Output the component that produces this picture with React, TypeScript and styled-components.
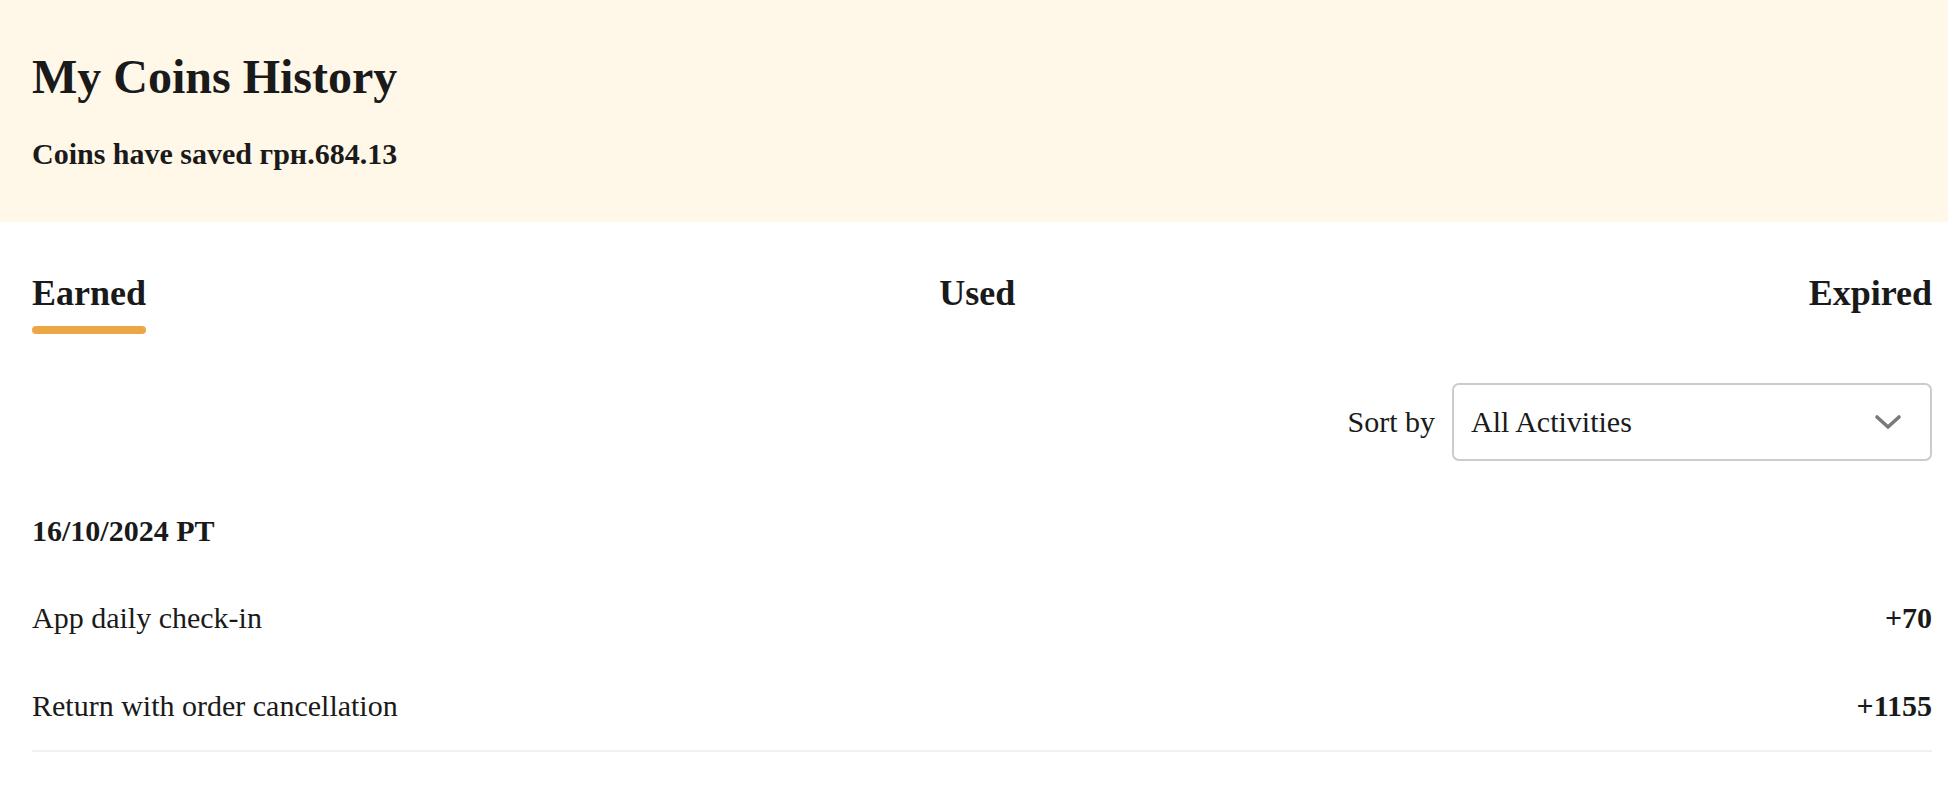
import React, { useState } from "react";
import styled, { createGlobalStyle } from "styled-components";

const GlobalStyle = createGlobalStyle`
  html, body {
    margin: 0;
    padding: 0;
    background: #ffffff;
  }
  body {
    font-family: "Liberation Serif", "Times New Roman", serif;
    color: #1a1a1a;
  }
`;

const Header = styled.header`
  background: #fff8e8;
  padding: 49px 16px 50px 32px;
`;

const Title = styled.h1`
  margin: 0;
  font-size: 48px;
  line-height: 56px;
  font-weight: 700;
`;

const Saved = styled.p`
  margin: 31px 0 0;
  font-size: 30px;
  line-height: 36px;
  font-weight: 700;
`;

const Main = styled.main`
  padding: 49px 16px 0 32px;
`;

const Tabs = styled.nav`
  display: flex;
  justify-content: space-between;
  align-items: flex-start;
`;

const Tab = styled.button<{ $active?: boolean }>`
  display: inline-flex;
  flex-direction: column;
  padding: 0;
  border: 0;
  background: none;
  font-family: inherit;
  color: #1a1a1a;
  font-size: 36px;
  line-height: 44px;
  font-weight: 700;
  cursor: pointer;

  &::after {
    content: "";
    display: block;
    height: 8px;
    margin-top: 11px;
    border-radius: 4px;
    background: ${(p) => (p.$active ? "#eca745" : "transparent")};
  }
`;

const SortRow = styled.div`
  display: flex;
  justify-content: flex-end;
  align-items: center;
  gap: 17px;
  margin-top: 49px;
`;

const SortLabel = styled.span`
  font-size: 30px;
  line-height: 36px;
`;

const Select = styled.div`
  box-sizing: border-box;
  width: 480px;
  height: 78px;
  display: flex;
  align-items: center;
  justify-content: space-between;
  padding: 0 28px 0 17px;
  border: 2px solid #cccccc;
  border-radius: 7px;
  font-size: 30px;
  line-height: 36px;
  cursor: pointer;
`;

const DateHeading = styled.h3`
  margin: 52px 0 25px;
  font-size: 30px;
  line-height: 36px;
  font-weight: 700;
`;

const List = styled.ul`
  margin: 0;
  padding: 0;
  list-style: none;
  border-bottom: 2px solid #f1f1f1;
`;

const Row = styled.li`
  display: flex;
  justify-content: space-between;
  padding: 26px 0;
  font-size: 30px;
  line-height: 36px;
`;

const Amount = styled.span`
  font-weight: 700;
`;

const Chevron = () => (
  <svg width="28" height="17" viewBox="0 0 28 17" fill="none">
    <polyline
      points="3,3 14,13 25,3"
      stroke="#7a7a7a"
      strokeWidth="3.6"
      strokeLinecap="round"
      strokeLinejoin="round"
    />
  </svg>
);

const entries = [
  { label: "App daily check-in", amount: "+70" },
  { label: "Return with order cancellation", amount: "+1155" },
];

export default function App() {
  const [tab, setTab] = useState("Earned");

  return (
    <>
      <GlobalStyle />
      <Header>
        <Title>My Coins History</Title>
        <Saved>Coins have saved грн.684.13</Saved>
      </Header>
      <Main>
        <Tabs>
          {["Earned", "Used", "Expired"].map((t) => (
            <Tab key={t} $active={tab === t} onClick={() => setTab(t)}>
              {t}
            </Tab>
          ))}
        </Tabs>

        <SortRow>
          <SortLabel>Sort by</SortLabel>
          <Select>
            <span>All Activities</span>
            <Chevron />
          </Select>
        </SortRow>

        <DateHeading>16/10/2024 PT</DateHeading>
        <List>
          {entries.map((e) => (
            <Row key={e.label}>
              <span>{e.label}</span>
              <Amount>{e.amount}</Amount>
            </Row>
          ))}
        </List>
      </Main>
    </>
  );
}
